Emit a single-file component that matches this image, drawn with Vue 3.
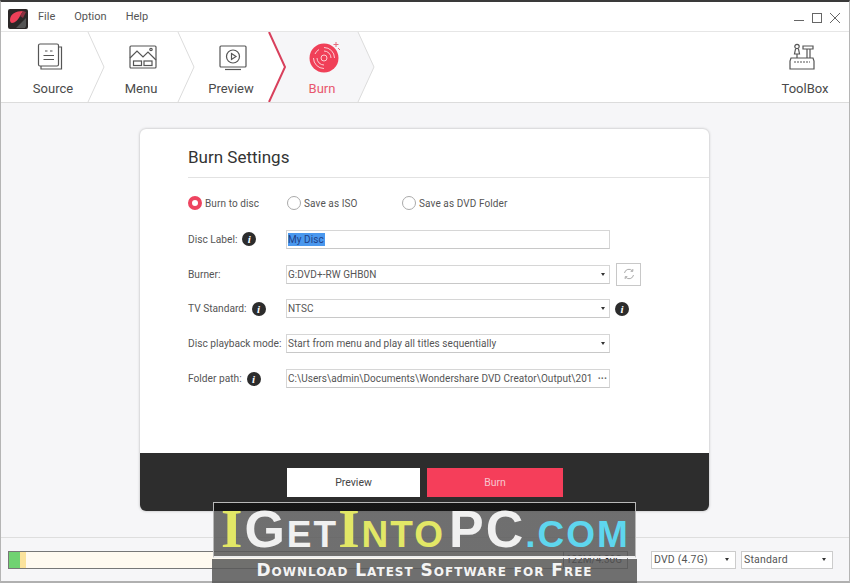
<template>
  <div class="window">
    <header class="menubar">
      <svg class="logo" width="20" height="20" viewBox="0 0 20 20">
        <rect width="20" height="20" rx="2" fill="#2b2727" />
        <path d="M2 11 C2 5 8 2 15 2 L12 7 C10 11 7 14 4 14 C3 14 2 13 2 11 Z" fill="#ee4058" />
        <path d="M12 7 L15 2 L18 3 L15 9 Z" fill="#8a3040" />
        <path d="M8 19 L18 9 V17 L17 19 Z" fill="#555" />
      </svg>
      <nav class="menu">
        <span v-for="m in menus" :key="m">{{ m }}</span>
      </nav>
      <div class="controls">
        <svg width="50" height="14" viewBox="0 0 50 14" fill="none" stroke="#666" stroke-width="1">
          <path d="M0 9.5 H10" />
          <rect x="18.5" y="2.5" width="9" height="9" />
          <path d="M36 2 L46 12 M46 2 L36 12" />
        </svg>
      </div>
    </header>

    <div class="tabs">
      <div v-for="t in tabs" :key="t.name" class="tab" :class="{ active: t.name === 'Burn' }">
        <svg v-if="t.name === 'Burn'" class="tab-bg" width="108" height="70" viewBox="0 0 108 70">
          <path d="M1 0 L17 35 L1 70 H90 L106 35 L90 0 Z" fill="#f6f6f8" />
          <path d="M1 0 L17 35 L1 70" fill="none" stroke="#d8405c" stroke-width="2" />
        </svg>
        <svg v-if="t.name !== 'Preview'" class="chevron" width="18" height="70" viewBox="0 0 18 70">
          <path d="M1 0 L17 35 L1 70" fill="none" stroke="#dcdcdc" />
        </svg>

        <svg v-if="t.name === 'Source'" class="tab-icon" width="28" height="28" viewBox="0 0 28 28" fill="none" stroke="#555" stroke-width="1.2">
          <rect x="1.5" y="1" width="20" height="22" rx="1.5" />
          <path d="M21.5 4 H24.5 V26 H4 V23" />
          <path d="M8 8 H10.5 M13 8 H15.5 M6.5 12.5 H17 M6.5 16.5 H17" />
        </svg>
        <svg v-else-if="t.name === 'Menu'" class="tab-icon" width="28" height="28" viewBox="0 0 28 28" fill="none" stroke="#555" stroke-width="1.2">
          <rect x="1" y="3" width="26" height="22" rx="1" />
          <path d="M1 15 L8 8 L14 14 L19 9 L27 17" />
          <circle cx="22" cy="6.5" r="1.2" />
          <rect x="4.5" y="18" width="8" height="4.5" />
          <rect x="15" y="18" width="8" height="4.5" />
        </svg>
        <svg v-else-if="t.name === 'Preview'" class="tab-icon" width="28" height="28" viewBox="0 0 28 28" fill="none" stroke="#555" stroke-width="1.2">
          <rect x="1" y="3" width="26" height="21" rx="1" />
          <circle cx="14" cy="13.5" r="6.5" />
          <path d="M12.5 10.5 L17 13.5 L12.5 16.5 Z" />
          <path d="M6 26.5 H22" />
        </svg>
        <svg v-else class="tab-icon burn-icon" width="32" height="32" viewBox="0 0 32 32" fill="none">
          <circle cx="15" cy="17" r="14.5" fill="#f04058" />
          <g stroke="#fff" stroke-width="1" opacity=".75">
            <circle cx="15" cy="17" r="3" />
            <path d="M15 10 A7 7 0 0 1 22 17 M15 24 A7 7 0 0 1 8 17" />
            <path d="M15 6.5 A10.5 10.5 0 0 1 25.5 17 M15 27.5 A10.5 10.5 0 0 1 4.5 17" />
            <path d="M6 13 A10 10 0 0 1 10 8.5" />
          </g>
          <path d="M27 1 V6 M24.5 3.5 H29.5 M29 7 L31 9" stroke="#e56a7c" stroke-width="1" />
        </svg>
        <span class="tab-name">{{ t.name }}</span>
      </div>
      <div class="tab toolbox">
        <svg class="tab-icon" width="28" height="28" viewBox="0 0 28 28" fill="none" stroke="#555" stroke-width="1.2">
          <path d="M3 15 H25 L26 18 V26 H2 V18 Z" />
          <path d="M6 19 H22" stroke-dasharray="2 1" />
          <circle cx="9" cy="3.5" r="2.2" />
          <path d="M7.5 6 L6.5 11 H11.5 L10.5 6 M9 11 V15" />
          <path d="M15 3 H25 V6 H15 Z M19 6 V15 M22 6 V15" />
        </svg>
        <span class="tab-name">ToolBox</span>
      </div>
    </div>

    <main class="content">
      <section class="card">
        <div class="card-main">
          <h1>Burn Settings</h1>
          <div class="radios">
            <label v-for="(r, i) in radios" :key="r.text" class="radio" :style="{ width: r.width + 'px' }">
              <span class="dot" :class="{ on: i === 0 }"></span>{{ r.text }}
            </label>
          </div>

          <div class="row">
            <div class="label">Disc Label:<i class="info">i</i></div>
            <div class="field"><span class="selected">My Disc</span></div>
          </div>
          <div class="row">
            <div class="label">Burner:</div>
            <div class="field">G:DVD+-RW GHB0N<b class="caret"></b></div>
            <button class="refresh">
              <svg width="12" height="12" viewBox="0 0 12 12" fill="none" stroke="#aaa" stroke-width="1">
                <path d="M1.5 5 A4.5 4.5 0 0 1 9.5 3 M10.5 7 A4.5 4.5 0 0 1 2.5 9" />
                <path d="M9.8 1 V3.3 H7.6 M2.2 11 V8.7 H4.4" />
              </svg>
            </button>
          </div>
          <div class="row">
            <div class="label">TV Standard:<i class="info">i</i></div>
            <div class="field">NTSC<b class="caret"></b></div>
            <i class="info after">i</i>
          </div>
          <div class="row">
            <div class="label">Disc playback mode:</div>
            <div class="field">Start from menu and play all titles sequentially<b class="caret"></b></div>
          </div>
          <div class="row">
            <div class="label">Folder path:<i class="info">i</i></div>
            <div class="field">
              <span class="path">C:\Users\admin\Documents\Wondershare DVD Creator\Output\201</span>
              <span class="dots">···</span>
            </div>
          </div>
        </div>
        <div class="card-foot">
          <button class="btn white">Preview</button>
          <button class="btn red">Burn</button>
        </div>
      </section>
    </main>

    <footer class="statusbar">
      <div class="capacity">
        <span class="used green"></span>
        <span class="used yellow"></span>
        <span class="amount">122M/4.30G</span>
      </div>
      <div class="pick disc">DVD (4.7G)<b class="caret"></b></div>
      <div class="pick std">Standard<b class="caret"></b></div>
    </footer>

    <div class="watermark">
      <div class="wm-top">
        <span class="y serif">I</span><span class="w big">G</span><span class="w">ET</span><span class="y serif">I</span><span class="y">NTO</span><span class="w big pc">PC</span><span class="c">.COM</span>
      </div>
      <div class="wm-bottom">Download Latest Software for Free</div>
    </div>
  </div>
</template>

<script setup>
const menus = ['File', 'Option', 'Help']
const tabs = [{ name: 'Source' }, { name: 'Menu' }, { name: 'Preview' }, { name: 'Burn' }]
const radios = [
  { text: 'Burn to disc', width: 99 },
  { text: 'Save as ISO', width: 115 },
  { text: 'Save as DVD Folder', width: 130 },
]
</script>

<style>
html, body {
  margin: 0;
  background: #fff;
}
</style>

<style scoped>
.window {
  position: relative;
  width: 850px;
  height: 583px;
  box-sizing: border-box;
  border-top: 2px solid #3a3a3a;
  border-left: 1px solid #b5b5b5;
  border-right: 1px solid #b5b5b5;
  border-bottom: 2px solid #b0b0b0;
  display: flex;
  flex-direction: column;
  font-family: Roboto, "Liberation Sans", sans-serif;
  color: #444;
  background: #fff;
}

.menubar {
  height: 30px;
  display: flex;
  align-items: center;
  padding-left: 7px;
  border-bottom: 1px solid #e6e6e6;
  box-sizing: border-box;
}
.logo { flex: none; margin-top: 4px; }
.menu {
  display: flex;
  gap: 19px;
  margin-left: 10px;
  font-size: 11px;
  color: #555;
}
.controls {
  margin-left: auto;
  margin-right: 5px;
  height: 14px;
}

.tabs {
  height: 71px;
  display: flex;
  box-sizing: border-box;
  border-bottom: 1px solid #dcdcdc;
}
.tab {
  position: relative;
  width: 90px;
  flex: none;
  display: flex;
  flex-direction: column;
  align-items: center;
  box-sizing: border-box;
}
.tab:nth-child(1) { width: 88px; padding-left: 16px; }
.tab:nth-child(1) .tab-icon { margin-right: 5px; }
.tab:nth-child(2), .tab:nth-child(3) { padding-left: 14px; }
.tab:nth-child(2) .tab-icon, .tab:nth-child(3) .tab-icon { margin-left: 3px; }
.tab:nth-child(4) { padding-left: 16px; }
.tab-bg {
  position: absolute;
  left: -1px;
  top: 0;
}
.chevron {
  position: absolute;
  right: -16px;
  top: 0;
  z-index: 1;
}
.tab-icon {
  position: relative;
  margin-top: 11px;
  height: 28px;
}
.tab .burn-icon {
  margin-top: 9px;
  height: 32px;
  margin-bottom: -2px;
  margin-left: 5px;
}
.tab-name {
  position: relative;
  margin-top: 10px;
  font-size: 13px;
  color: #4a4a4a;
}
.active .tab-name { color: #e8566e; }
.toolbox { margin-left: auto; width: 70px; margin-right: 9px; }
.toolbox .tab-icon { margin-right: 6px; }

.content {
  flex: 1;
  background: #f6f6f8;
  padding-top: 26px;
  padding-left: 139px;
  box-sizing: border-box;
  min-height: 0;
}
.card {
  width: 569px;
  height: 382px;
  background: #fff;
  border-radius: 6px;
  box-shadow: 0 0 3px rgba(0, 0, 0, .28);
  display: flex;
  flex-direction: column;
  overflow: hidden;
}
.card-main {
  flex: 1;
  padding-left: 48px;
}
h1 {
  margin: 0;
  height: 49px;
  line-height: 56px;
  font-size: 17px;
  font-weight: 400;
  color: #333;
  border-bottom: 1px solid #e2e2e2;
  box-sizing: border-box;
}
.radios {
  display: flex;
  align-items: center;
  height: 44px;
  padding-top: 6px;
  box-sizing: border-box;
}
.radio {
  display: flex;
  align-items: center;
  gap: 3px;
  font-size: 10px;
  color: #555;
  letter-spacing: .1px;
  box-sizing: border-box;
}
.dot {
  width: 14px;
  height: 14px;
  border-radius: 50%;
  border: 1px solid #aaa;
  box-sizing: border-box;
  background: #fff;
}
.dot.on {
  border: 4px solid #ee4460;
}
.row {
  height: 34.8px;
  display: flex;
  align-items: center;
}
.label {
  width: 98px;
  flex: none;
  display: flex;
  align-items: center;
  gap: 5px;
  color: #555;
  font-size: 10.2px;
  white-space: nowrap;
}
.field {
  position: relative;
  width: 324px;
  height: 19px;
  box-sizing: border-box;
  border: 1px solid #d6d6d6;
  border-bottom-color: #c8c8c8;
  padding-left: 1px;
  display: flex;
  align-items: center;
  color: #555;
  font-size: 10px;
  letter-spacing: .06px;
  white-space: nowrap;
  overflow: hidden;
}
.selected {
  background: #4a98ee;
  color: #1f3f86;
  line-height: 13px;
  padding-right: 1px;
}
.caret {
  position: absolute;
  right: 4px;
  top: 7px;
  border: 2.5px solid transparent;
  border-top: 3px solid #333;
  border-bottom: 0;
}
.path {
  width: 304px;
  overflow: hidden;
}
.dots {
  position: absolute;
  right: 2px;
  font-weight: 700;
  color: #666;
}
.info {
  width: 14px;
  height: 14px;
  flex: none;
  border-radius: 50%;
  background: #2c2c2c;
  color: #fff;
  font: italic 700 11px/14px "Liberation Serif", serif;
  text-align: center;
}
.info.after { margin-left: 5px; }
.refresh {
  width: 25px;
  height: 23px;
  margin-left: 6px;
  padding: 0;
  background: #fff;
  border: 1px solid #c8c8c8;
  display: flex;
  align-items: center;
  justify-content: center;
}

.card-foot {
  height: 58px;
  flex: none;
  background: #2d2d2d;
  display: flex;
  align-items: center;
  padding-left: 147px;
  gap: 7px;
}
.btn {
  height: 29px;
  border: 0;
  padding: 0;
  font-family: Roboto, "Liberation Sans", sans-serif;
  font-size: 10.5px;
}
.white { width: 133px; background: #fff; color: #444; }
.red { width: 136px; background: #f53e5a; color: #f7c5cd; }

.statusbar {
  height: 44px;
  flex: none;
  display: flex;
  align-items: flex-start;
  padding: 13px 0 0 7px;
  box-sizing: border-box;
  background: #f6f6f8;
  border-top: 1px solid #dedede;
}
.capacity {
  position: relative;
  width: 620px;
  height: 18px;
  box-sizing: border-box;
  border: 1px solid #777;
  background: #fffaf0;
  display: flex;
}
.used { height: 100%; }
.green { width: 11px; background: #70d272; }
.yellow { width: 6px; background: #fbe39c; }
.amount {
  position: absolute;
  right: 0;
  top: 0;
  width: 64px;
  height: 16px;
  box-sizing: border-box;
  border-left: 1px solid #777;
  padding-left: 2px;
  line-height: 16px;
  font-size: 10px;
  color: #222;
  background: #f6f6f8;
}
.pick {
  position: relative;
  height: 18px;
  box-sizing: border-box;
  border: 1px solid #ccc;
  background: #fff;
  font-size: 10.5px;
  line-height: 16px;
  padding-left: 2px;
  color: #555;
  letter-spacing: .2px;
}
.disc { width: 85px; margin-left: 23px; }
.std { width: 92px; margin-left: 5px; }
.pick .caret { top: 6px; right: 6px; }

.watermark {
  position: absolute;
  left: 211px;
  top: 500px;
  width: 425px;
  color: #fff;
}
.wm-top {
  height: 56px;
  box-sizing: border-box;
  margin: 0 1px;
  border: 1px solid #b8b8b8;
  border-bottom: 2px solid #eee;
  background: linear-gradient(rgba(20, 20, 20, .9) 0 8px, rgba(89, 89, 89, .86) 8px);
  font: 700 37px/52px "Liberation Sans", sans-serif;
  white-space: nowrap;
  padding-left: 7px;
  letter-spacing: 2px;
}
.big { font-size: 52px; }
.pc { margin-left: 4px; }
.serif { font-family: "Liberation Serif", serif; font-size: 55px; }
.y { color: #e2e766; }
.w { color: #f0f0f0; }
.c { color: #5ed6ee; }
.wm-bottom {
  height: 25px;
  margin-top: 1px;
  background: rgba(89, 89, 89, .86);
  font: 700 17px/23px "DejaVu Sans", sans-serif;
  font-variant: small-caps;
  text-align: center;
  letter-spacing: 1px;
  white-space: nowrap;
  color: #f4f4f4;
}
</style>
